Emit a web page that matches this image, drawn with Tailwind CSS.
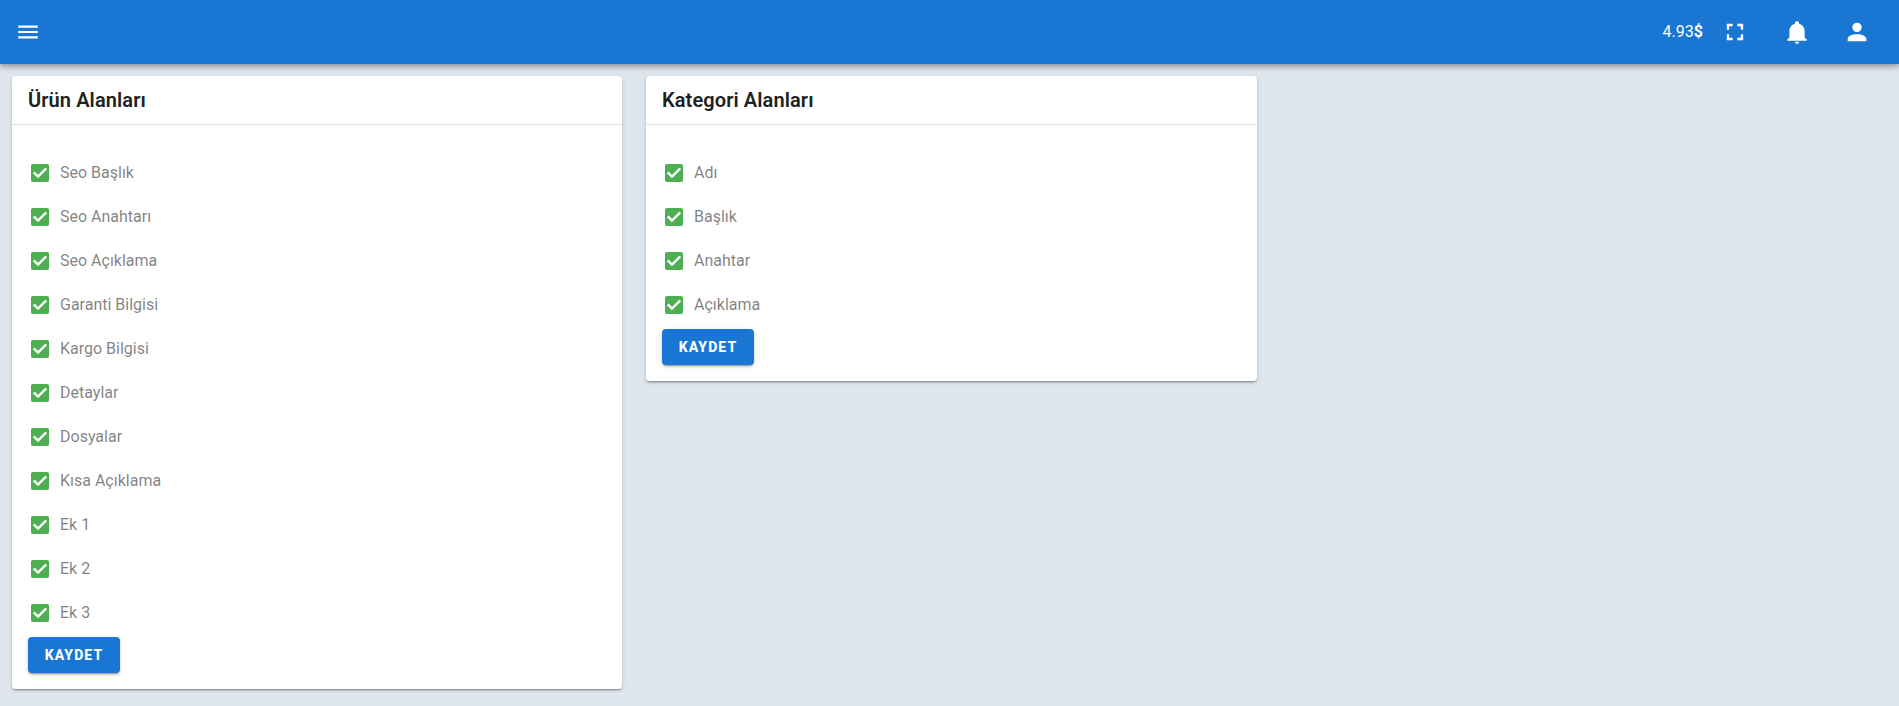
<!DOCTYPE html>
<html lang="tr">
<head>
<meta charset="utf-8">
<title>Alanlar</title>
<script src="https://cdn.jsdelivr.net/npm/@tailwindcss/browser@4"></script>
</head>
<body class="h-[706px] overflow-hidden bg-[#dfe6ee] font-['Roboto',sans-serif]">
<header class="relative z-10 flex h-16 items-center justify-between bg-[#1976d2] pl-[15px] pr-[28px] text-white shadow-[0_2px_4px_-1px_rgba(0,0,0,0.2),0_4px_5px_0_rgba(0,0,0,0.14),0_1px_10px_0_rgba(0,0,0,0.12)]">
  <svg class="h-[26px] w-[26px]" viewBox="0 0 24 24" fill="currentColor"><path d="M3,6H21V8H3V6M3,11H21V13H3V11M3,16H21V18H3V16Z"/></svg>
  <div class="flex items-center">
    <span class="text-base leading-none">4.93<b class="font-bold">$</b></span>
    <svg class="ml-[18px] h-7 w-7" viewBox="0 0 24 24" fill="currentColor"><path d="M5,5H10V7H7V10H5V5M14,5H19V10H17V7H14V5M17,14H19V19H14V17H17V14M10,17V19H5V14H7V17H10Z"/></svg>
    <svg class="ml-[35px] h-[26px] w-[26px]" viewBox="0 0 24 24" fill="currentColor"><path d="M21,19V20H3V19L5,17V11C5,7.9 7.03,5.17 10,4.29C10,4.19 10,4.1 10,4A2,2 0 0,1 12,2A2,2 0 0,1 14,4C14,4.1 14,4.19 14,4.29C16.97,5.17 19,7.9 19,11V17L21,19M14,21A2,2 0 0,1 12,23A2,2 0 0,1 10,21"/></svg>
    <svg class="ml-[33px] h-7 w-7" viewBox="0 0 24 24" fill="currentColor"><path d="M12,4A4,4 0 0,1 16,8A4,4 0 0,1 12,12A4,4 0 0,1 8,8A4,4 0 0,1 12,4M12,14C16.42,14 20,15.79 20,18V20H4V18C4,15.79 7.58,14 12,14Z"/></svg>
  </div>
</header>
<main class="flex items-start gap-6 px-3 pt-3">
  <section class="w-[610px] rounded bg-white shadow-[0_3px_1px_-2px_rgba(0,0,0,0.2),0_2px_2px_0_rgba(0,0,0,0.14),0_1px_5px_0_rgba(0,0,0,0.12)]">
    <h2 class="flex h-[49px] items-center border-b border-[#e0e0e0] px-4 text-xl font-semibold tracking-[0.1px] text-[#212121]">Ürün Alanları</h2>
    <div class="px-4 pb-4 pt-[26px]">
      <ul class="text-base text-black/50">
        <li class="flex h-11 items-center"><svg class="h-6 w-6" viewBox="0 0 24 24"><path fill="#4caf50" d="M19,3H5C3.89,3 3,3.89 3,5V19A2,2 0 0,0 5,21H19A2,2 0 0,0 21,19V5C21,3.89 20.1,3 19,3Z"/><path fill="none" stroke="#fff" stroke-width="2.4" d="M5.7,11.3L10,15.6L18.3,7.3"/></svg><span class="ml-2">Seo Başlık</span></li>
        <li class="flex h-11 items-center"><svg class="h-6 w-6" viewBox="0 0 24 24"><path fill="#4caf50" d="M19,3H5C3.89,3 3,3.89 3,5V19A2,2 0 0,0 5,21H19A2,2 0 0,0 21,19V5C21,3.89 20.1,3 19,3Z"/><path fill="none" stroke="#fff" stroke-width="2.4" d="M5.7,11.3L10,15.6L18.3,7.3"/></svg><span class="ml-2">Seo Anahtarı</span></li>
        <li class="flex h-11 items-center"><svg class="h-6 w-6" viewBox="0 0 24 24"><path fill="#4caf50" d="M19,3H5C3.89,3 3,3.89 3,5V19A2,2 0 0,0 5,21H19A2,2 0 0,0 21,19V5C21,3.89 20.1,3 19,3Z"/><path fill="none" stroke="#fff" stroke-width="2.4" d="M5.7,11.3L10,15.6L18.3,7.3"/></svg><span class="ml-2">Seo Açıklama</span></li>
        <li class="flex h-11 items-center"><svg class="h-6 w-6" viewBox="0 0 24 24"><path fill="#4caf50" d="M19,3H5C3.89,3 3,3.89 3,5V19A2,2 0 0,0 5,21H19A2,2 0 0,0 21,19V5C21,3.89 20.1,3 19,3Z"/><path fill="none" stroke="#fff" stroke-width="2.4" d="M5.7,11.3L10,15.6L18.3,7.3"/></svg><span class="ml-2">Garanti Bilgisi</span></li>
        <li class="flex h-11 items-center"><svg class="h-6 w-6" viewBox="0 0 24 24"><path fill="#4caf50" d="M19,3H5C3.89,3 3,3.89 3,5V19A2,2 0 0,0 5,21H19A2,2 0 0,0 21,19V5C21,3.89 20.1,3 19,3Z"/><path fill="none" stroke="#fff" stroke-width="2.4" d="M5.7,11.3L10,15.6L18.3,7.3"/></svg><span class="ml-2">Kargo Bilgisi</span></li>
        <li class="flex h-11 items-center"><svg class="h-6 w-6" viewBox="0 0 24 24"><path fill="#4caf50" d="M19,3H5C3.89,3 3,3.89 3,5V19A2,2 0 0,0 5,21H19A2,2 0 0,0 21,19V5C21,3.89 20.1,3 19,3Z"/><path fill="none" stroke="#fff" stroke-width="2.4" d="M5.7,11.3L10,15.6L18.3,7.3"/></svg><span class="ml-2">Detaylar</span></li>
        <li class="flex h-11 items-center"><svg class="h-6 w-6" viewBox="0 0 24 24"><path fill="#4caf50" d="M19,3H5C3.89,3 3,3.89 3,5V19A2,2 0 0,0 5,21H19A2,2 0 0,0 21,19V5C21,3.89 20.1,3 19,3Z"/><path fill="none" stroke="#fff" stroke-width="2.4" d="M5.7,11.3L10,15.6L18.3,7.3"/></svg><span class="ml-2">Dosyalar</span></li>
        <li class="flex h-11 items-center"><svg class="h-6 w-6" viewBox="0 0 24 24"><path fill="#4caf50" d="M19,3H5C3.89,3 3,3.89 3,5V19A2,2 0 0,0 5,21H19A2,2 0 0,0 21,19V5C21,3.89 20.1,3 19,3Z"/><path fill="none" stroke="#fff" stroke-width="2.4" d="M5.7,11.3L10,15.6L18.3,7.3"/></svg><span class="ml-2">Kısa Açıklama</span></li>
        <li class="flex h-11 items-center"><svg class="h-6 w-6" viewBox="0 0 24 24"><path fill="#4caf50" d="M19,3H5C3.89,3 3,3.89 3,5V19A2,2 0 0,0 5,21H19A2,2 0 0,0 21,19V5C21,3.89 20.1,3 19,3Z"/><path fill="none" stroke="#fff" stroke-width="2.4" d="M5.7,11.3L10,15.6L18.3,7.3"/></svg><span class="ml-2">Ek 1</span></li>
        <li class="flex h-11 items-center"><svg class="h-6 w-6" viewBox="0 0 24 24"><path fill="#4caf50" d="M19,3H5C3.89,3 3,3.89 3,5V19A2,2 0 0,0 5,21H19A2,2 0 0,0 21,19V5C21,3.89 20.1,3 19,3Z"/><path fill="none" stroke="#fff" stroke-width="2.4" d="M5.7,11.3L10,15.6L18.3,7.3"/></svg><span class="ml-2">Ek 2</span></li>
        <li class="flex h-11 items-center"><svg class="h-6 w-6" viewBox="0 0 24 24"><path fill="#4caf50" d="M19,3H5C3.89,3 3,3.89 3,5V19A2,2 0 0,0 5,21H19A2,2 0 0,0 21,19V5C21,3.89 20.1,3 19,3Z"/><path fill="none" stroke="#fff" stroke-width="2.4" d="M5.7,11.3L10,15.6L18.3,7.3"/></svg><span class="ml-2">Ek 3</span></li>
      </ul>
      <button class="mt-[2px] block h-9 w-[92px] rounded bg-[#1976d2] text-sm font-extrabold tracking-[1.1px] text-white shadow-[0_3px_1px_-2px_rgba(0,0,0,0.2),0_2px_2px_0_rgba(0,0,0,0.14),0_1px_5px_0_rgba(0,0,0,0.12)]">KAYDET</button>
    </div>
  </section>
  <section class="w-[611px] rounded bg-white shadow-[0_3px_1px_-2px_rgba(0,0,0,0.2),0_2px_2px_0_rgba(0,0,0,0.14),0_1px_5px_0_rgba(0,0,0,0.12)]">
    <h2 class="flex h-[49px] items-center border-b border-[#e0e0e0] px-4 text-xl font-semibold tracking-[0.1px] text-[#212121]">Kategori Alanları</h2>
    <div class="px-4 pb-4 pt-[26px]">
      <ul class="text-base text-black/50">
        <li class="flex h-11 items-center"><svg class="h-6 w-6" viewBox="0 0 24 24"><path fill="#4caf50" d="M19,3H5C3.89,3 3,3.89 3,5V19A2,2 0 0,0 5,21H19A2,2 0 0,0 21,19V5C21,3.89 20.1,3 19,3Z"/><path fill="none" stroke="#fff" stroke-width="2.4" d="M5.7,11.3L10,15.6L18.3,7.3"/></svg><span class="ml-2">Adı</span></li>
        <li class="flex h-11 items-center"><svg class="h-6 w-6" viewBox="0 0 24 24"><path fill="#4caf50" d="M19,3H5C3.89,3 3,3.89 3,5V19A2,2 0 0,0 5,21H19A2,2 0 0,0 21,19V5C21,3.89 20.1,3 19,3Z"/><path fill="none" stroke="#fff" stroke-width="2.4" d="M5.7,11.3L10,15.6L18.3,7.3"/></svg><span class="ml-2">Başlık</span></li>
        <li class="flex h-11 items-center"><svg class="h-6 w-6" viewBox="0 0 24 24"><path fill="#4caf50" d="M19,3H5C3.89,3 3,3.89 3,5V19A2,2 0 0,0 5,21H19A2,2 0 0,0 21,19V5C21,3.89 20.1,3 19,3Z"/><path fill="none" stroke="#fff" stroke-width="2.4" d="M5.7,11.3L10,15.6L18.3,7.3"/></svg><span class="ml-2">Anahtar</span></li>
        <li class="flex h-11 items-center"><svg class="h-6 w-6" viewBox="0 0 24 24"><path fill="#4caf50" d="M19,3H5C3.89,3 3,3.89 3,5V19A2,2 0 0,0 5,21H19A2,2 0 0,0 21,19V5C21,3.89 20.1,3 19,3Z"/><path fill="none" stroke="#fff" stroke-width="2.4" d="M5.7,11.3L10,15.6L18.3,7.3"/></svg><span class="ml-2">Açıklama</span></li>
      </ul>
      <button class="mt-[2px] block h-9 w-[92px] rounded bg-[#1976d2] text-sm font-extrabold tracking-[1.1px] text-white shadow-[0_3px_1px_-2px_rgba(0,0,0,0.2),0_2px_2px_0_rgba(0,0,0,0.14),0_1px_5px_0_rgba(0,0,0,0.12)]">KAYDET</button>
    </div>
  </section>
</main>
</body>
</html>
